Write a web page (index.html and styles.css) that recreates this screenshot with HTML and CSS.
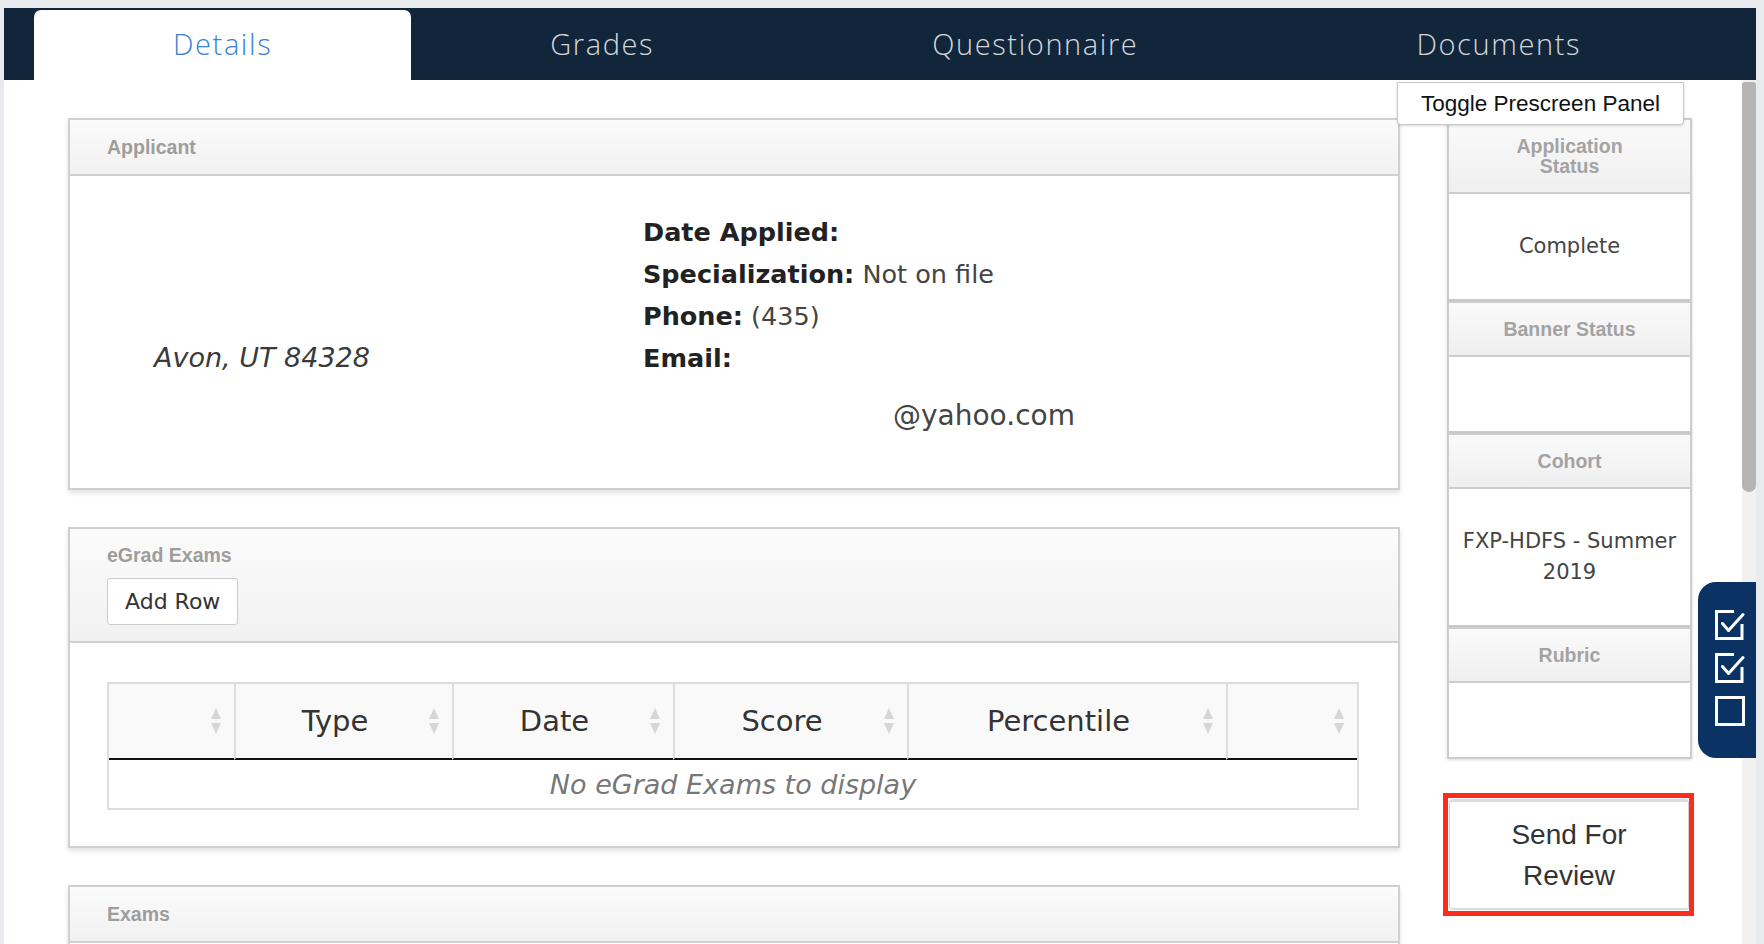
FILE: index.html
```html
<!DOCTYPE html>
<html lang="en">
<head>
<meta charset="utf-8">
<title>Applicant Details</title>
<link rel="stylesheet" href="styles.css">
</head>
<body>
<div class="frame">
  <nav class="tabs">
    <div class="tab active">Details</div>
    <div class="tab">Grades</div>
    <div class="tab">Questionnaire</div>
    <div class="tab">Documents</div>
  </nav>
  <div class="viewport">
    <div class="content">
      <button class="toggle">Toggle Prescreen Panel</button>
      <div class="layout">
        <main class="main">
          <section class="card">
            <div class="card-head"><div class="card-title">Applicant</div></div>
            <div class="applicant">
              <div class="addr">Avon, UT 84328</div>
              <div class="info">
                <div class="line"><b>Date Applied:</b></div>
                <div class="line"><b>Specialization:</b> Not on file</div>
                <div class="line"><b>Phone:</b> (435)</div>
                <div class="line"><b>Email:</b></div>
                <div class="email">@yahoo.com</div>
              </div>
            </div>
          </section>

          <section class="card">
            <div class="card-head card-head-tall">
              <div class="card-title">eGrad Exams</div>
              <button class="btn-add">Add Row</button>
            </div>
            <div class="card-body">
              <table class="grid">
                <colgroup>
                  <col class="w1"><col class="w2"><col class="w3"><col class="w4"><col class="w5"><col class="w6">
                </colgroup>
                <thead>
                  <tr>
                    <th><svg class="sort" width="10" height="26" viewBox="0 0 10 26"><path d="M5 0 L10 11 H0 Z M0 15 H10 L5 26 Z"/></svg></th>
                    <th>Type<svg class="sort" width="10" height="26" viewBox="0 0 10 26"><path d="M5 0 L10 11 H0 Z M0 15 H10 L5 26 Z"/></svg></th>
                    <th>Date<svg class="sort" width="10" height="26" viewBox="0 0 10 26"><path d="M5 0 L10 11 H0 Z M0 15 H10 L5 26 Z"/></svg></th>
                    <th>Score<svg class="sort" width="10" height="26" viewBox="0 0 10 26"><path d="M5 0 L10 11 H0 Z M0 15 H10 L5 26 Z"/></svg></th>
                    <th>Percentile<svg class="sort" width="10" height="26" viewBox="0 0 10 26"><path d="M5 0 L10 11 H0 Z M0 15 H10 L5 26 Z"/></svg></th>
                    <th><svg class="sort" width="10" height="26" viewBox="0 0 10 26"><path d="M5 0 L10 11 H0 Z M0 15 H10 L5 26 Z"/></svg></th>
                  </tr>
                </thead>
                <tbody>
                  <tr><td class="empty" colspan="6">No eGrad Exams to display</td></tr>
                </tbody>
              </table>
            </div>
          </section>

          <section class="card">
            <div class="card-head"><div class="card-title">Exams</div></div>
            <div class="card-body card-body-long"></div>
          </section>
        </main>

        <aside class="side">
          <div class="sbox">
            <div class="sbox-head">Application<br>Status</div>
            <div class="sbox-body">Complete</div>
          </div>
          <div class="sbox">
            <div class="sbox-head">Banner Status</div>
            <div class="sbox-body"></div>
          </div>
          <div class="sbox">
            <div class="sbox-head">Cohort</div>
            <div class="sbox-body">FXP-HDFS - Summer 2019</div>
          </div>
          <div class="sbox">
            <div class="sbox-head">Rubric</div>
            <div class="sbox-body"></div>
          </div>
          <div class="review-mark">
            <button class="btn-review">Send For<br>Review</button>
          </div>
        </aside>
      </div>
    </div>
    <div class="scrollbar"><div class="thumb"></div></div>
  </div>

  <div class="checklist">
    <svg width="30" height="30" viewBox="0 0 30 30" fill="none" stroke="#fff" stroke-width="3"><path d="M27 14 V28.5 H1.5 V1.5 H19"/><path d="M7.5 13.5 L13.5 20.5 L28 4.5" stroke-linecap="round" stroke-linejoin="round"/></svg>
    <svg width="30" height="30" viewBox="0 0 30 30" fill="none" stroke="#fff" stroke-width="3"><path d="M27 14 V28.5 H1.5 V1.5 H19"/><path d="M7.5 13.5 L13.5 20.5 L28 4.5" stroke-linecap="round" stroke-linejoin="round"/></svg>
    <svg width="30" height="30" viewBox="0 0 30 30" fill="none" stroke="#fff" stroke-width="3"><rect x="1.5" y="1.5" width="27" height="27"/></svg>
  </div>
</div>
</body>
</html>
```

FILE: styles.css
```css
* { box-sizing: border-box; }

html, body {
  margin: 0;
  height: 944px;
  overflow: hidden;
}

body {
  background: #e8ebee;
  font-family: "DejaVu Sans", "Noto Sans", sans-serif;
  color: #333;
}

.frame {
  position: relative;
  margin: 8px 8px 0 4px;
  height: 936px;
  display: flex;
  flex-direction: column;
  background: #fff;
  overflow: hidden;
}

/* ---------- tabs ---------- */
.tabs {
  flex: none;
  height: 72px;
  display: flex;
  align-items: flex-end;
  padding-left: 30px;
  background: #12263b;
}

.tab {
  height: 70px;
  line-height: 68px;
  padding: 0 139px;
  font-family: "Open Sans", sans-serif;
  font-weight: 300;
  font-size: 29px;
  letter-spacing: 1.6px;
  color: #d3d7dc;
  white-space: nowrap;
}

.tab.active {
  background: #fff;
  color: #3a7fd9;
  border-radius: 7px 7px 0 0;
}

/* ---------- viewport ---------- */
.viewport {
  flex: 1;
  min-height: 0;
  display: flex;
}

.content {
  flex: 1;
  position: relative;
  overflow: hidden;
  padding: 38px 0 0 64px;
}

.scrollbar {
  flex: none;
  width: 14px;
  background: #f1f1f1;
}

.thumb {
  margin-top: 2px;
  height: 410px;
  background: #b4b4b4;
  border-radius: 3px 3px 7px 7px;
}

.toggle {
  position: absolute;
  top: 2px;
  left: 1393px;
  z-index: 2;
  width: 287px;
  height: 43px;
  padding: 0;
  background: #fff;
  border: 1px solid #c8c8c8;
  border-radius: 0 0 4px 4px;
  box-shadow: 0 1px 3px rgba(0, 0, 0, 0.15);
  font-family: "Liberation Sans", Arial, sans-serif;
  font-size: 22.5px;
  color: #111;
}

.layout {
  display: flex;
  align-items: flex-start;
  gap: 47px;
}

.main {
  flex: none;
  width: 1332px;
}

.side {
  flex: none;
  width: 245px;
}

/* ---------- cards ---------- */
.card {
  background: #fff;
  border: 2px solid #d0d0d0;
  box-shadow: 0 3px 5px rgba(0, 0, 0, 0.12);
  margin-bottom: 37px;
}

.card-head {
  background: linear-gradient(#fbfbfb, #f1f1f1);
  border-bottom: 2px solid #d0d0d0;
  padding: 16px 37px;
}

.card-head-tall {
  padding: 15px 37px 16px;
}

.card-title {
  font-family: "Liberation Sans", Arial, sans-serif;
  font-weight: bold;
  font-size: 19.5px;
  line-height: 22px;
  color: #9d9d9d;
}

.applicant {
  display: grid;
  grid-template-columns: 489px 1fr;
  padding: 35px 0 51px 84px;
  font-size: 25.5px;
  color: #444;
}

.applicant b {
  color: #222;
}

.addr {
  padding-top: 126px;
  line-height: 42px;
  font-style: italic;
  font-size: 27px;
  color: #3a3a3a;
}

.line {
  line-height: 42px;
}

.email {
  margin-top: 16px;
  padding-left: 250px;
  line-height: 42px;
  font-size: 28px;
}

.btn-add {
  display: block;
  margin-top: 12px;
  height: 47px;
  padding: 0 17px;
  background: #fff;
  border: 1px solid #ccc;
  border-radius: 3px;
  font-family: "DejaVu Sans", sans-serif;
  font-size: 22px;
  color: #333;
}

.card-body {
  padding: 39px 39px 36px 37px;
}

.card-body-long {
  height: 900px;
}

/* ---------- table ---------- */
.grid {
  width: 100%;
  table-layout: fixed;
  border-collapse: separate;
  border-spacing: 0;
  border: 2px solid #ddd;
}

.w1 { width: 125px; }
.w2 { width: 218px; }
.w3 { width: 221px; }
.w4 { width: 234px; }
.w5 { width: 319px; }
.w6 { width: 131px; }

.grid th {
  position: relative;
  height: 76px;
  padding: 0 28px 0 10px;
  background: #f9f9f9;
  border-left: 2px solid #ddd;
  border-bottom: 2px solid #111;
  font-weight: normal;
  font-size: 29px;
  color: #333;
  text-align: center;
}

.grid th:first-child {
  border-left: 0;
}

.sort {
  position: absolute;
  right: 13px;
  top: 24px;
  fill: #d6d6d6;
}

.grid td.empty {
  height: 48px;
  padding: 0;
  text-align: center;
  font-style: italic;
  font-size: 27px;
  color: #777;
}

/* ---------- side panel ---------- */
.sbox {
  background: #fff;
  border: 2px solid #cdcdcd;
  box-shadow: 0 1px 3px rgba(0, 0, 0, 0.15);
}

.sbox-head {
  padding: 16px 4px;
  background: linear-gradient(#fafafa, #efefef);
  border-bottom: 2px solid #cdcdcd;
  text-align: center;
  font-family: "Liberation Sans", Arial, sans-serif;
  font-weight: bold;
  font-size: 19.5px;
  line-height: 20px;
  color: #a3a3a3;
}

.sbox-body {
  min-height: 74px;
  padding: 37px 2px;
  text-align: center;
  font-size: 21px;
  line-height: 31px;
  color: #444;
}

.review-mark {
  margin: 34px 0 0 -4px;
  width: 251px;
  padding: 1px 0 1px 1px;
  border: 5px solid #ff2b1c;
}

.btn-review {
  display: block;
  width: 100%;
  padding: 12px 0;
  background: #fff;
  border: 1px solid #d2d2d2;
  border-top: 3px solid #dcdcdc;
  border-bottom: 2px solid #dcdcdc;
  border-radius: 4px;
  font-family: "Liberation Sans", Arial, sans-serif;
  font-size: 28px;
  line-height: 41px;
  color: #333;
}

/* ---------- checklist tab ---------- */
.checklist {
  position: absolute;
  right: 0;
  top: 574px;
  width: 58px;
  height: 176px;
  padding: 28px 0 0 17px;
  display: flex;
  flex-direction: column;
  gap: 13px;
  background: #0a3363;
  border-radius: 18px 0 0 18px;
}
```
